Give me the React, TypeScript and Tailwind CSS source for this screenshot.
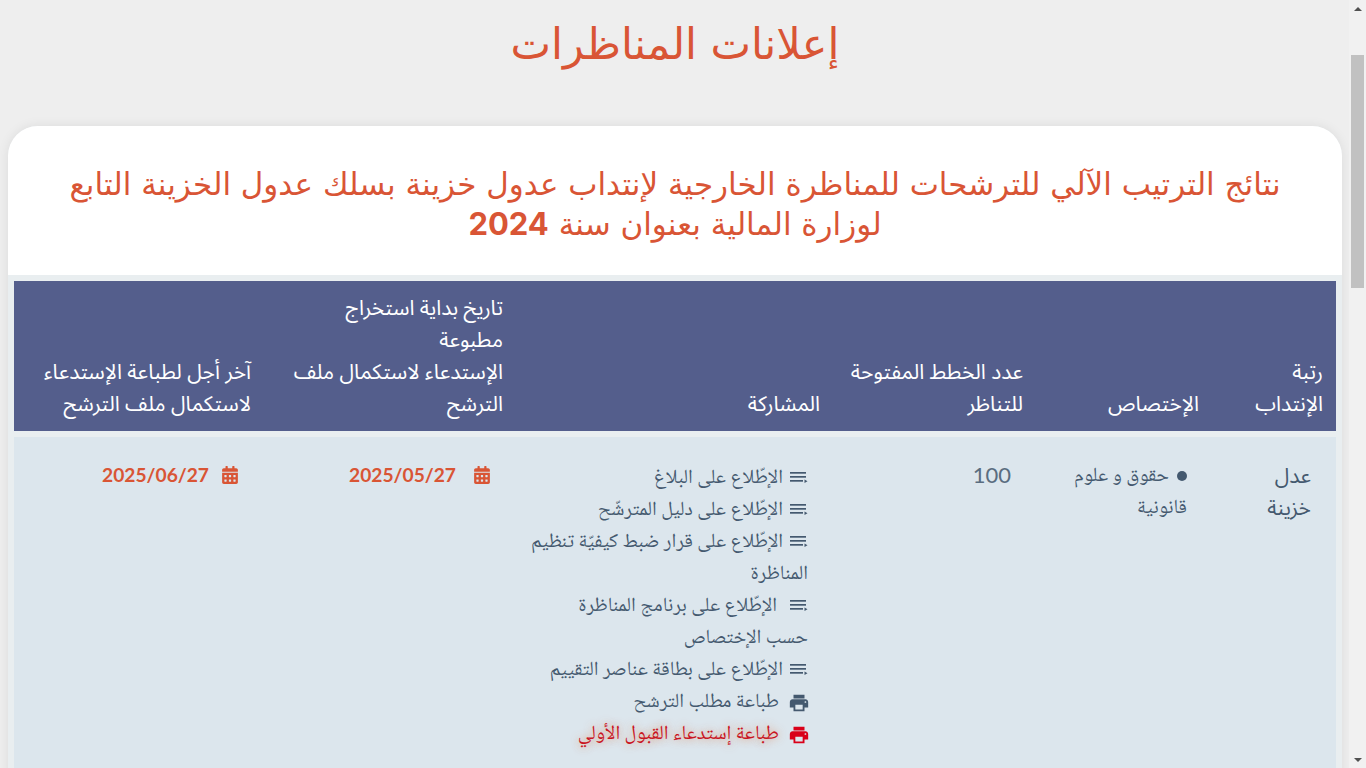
import { FaCalendarAlt } from 'react-icons/fa';
import { MdPrint } from 'react-icons/md';

const ListIcon = ({ wide = false }: { wide?: boolean }) => (
  <svg
    viewBox="0 0 18 14"
    className={`inline-block w-[18px] h-[14px] fill-[#44596f] ${wide ? 'ml-[13px]' : 'ml-[7px]'}`}
  >
    <rect x="0" y="1" width="16" height="1.7" />
    <rect x="0" y="5" width="16" height="1.7" />
    <rect x="0" y="9" width="13" height="1.7" />
    <path d="M14.5 8.5l3 1.8-3 1.8z" />
  </svg>
);

const links = [
  { text: 'الإطّلاع على البلاغ' },
  { text: 'الإطّلاع على دليل المترشّح' },
  { text: 'الإطّلاع على قرار ضبط كيفيّة تنظيم المناظرة' },
  { text: 'الإطّلاع على برنامج المناظرة', more: 'حسب الإختصاص' },
  { text: 'الإطّلاع على بطاقة عناصر التقييم' },
];

function App() {
  return (
    <div className="flex h-screen w-full overflow-hidden bg-[#eeeeee] font-['DejaVu_Sans',sans-serif]">
      <main dir="rtl" className="flex-1 min-w-0 overflow-hidden pr-[7px] pl-[8px]">
        <h1 className="h-[126px] pt-[17px] text-center text-[43px] leading-[54px] text-[#d95535]">إعلانات المناظرات</h1>
        <section className="rounded-t-[30px] bg-[#e9eef0] shadow-[0_0_12px_rgba(0,0,0,0.08)]">
          <h2 className="h-[149px] rounded-t-[30px] bg-white px-[50px] pt-[38px] text-center text-[31px] leading-[40px] text-[#d95535]">
            نتائج الترتيب الآلي للترشحات للمناظرة الخارجية لإنتداب عدول خزينة بسلك عدول الخزينة التابع لوزارة المالية بعنوان سنة <b className="font-['Inter',sans-serif]">2024</b>
          </h2>
          <div className="px-[6px]">
            <table className="w-full table-fixed border-separate border-spacing-x-0 border-spacing-y-[6px] text-[20px] leading-[32px]">
              <colgroup>
                <col className="w-[124px]" />
                <col className="w-[176px]" />
                <col className="w-[203px]" />
                <col className="w-[317px]" />
                <col className="w-[252px]" />
                <col />
              </colgroup>
              <thead className="bg-[#545e8c] text-white text-[21px] font-['Noto_Sans_Arabic',sans-serif]">
                <tr className="align-bottom text-right">
                  <th className="px-[13px] py-[11px] font-normal">
                    رتبة
                    <br />
                    الإنتداب
                  </th>
                  <th className="px-[13px] py-[11px] font-normal">الإختصاص</th>
                  <th className="px-[13px] py-[11px] font-normal">عدد الخطط المفتوحة للتناظر</th>
                  <th className="px-[13px] py-[11px] font-normal">المشاركة</th>
                  <th className="px-[13px] py-[11px] font-normal">
                    تاريخ بداية استخراج
                    <br />
                    مطبوعة
                    <br />
                    الإستدعاء لاستكمال ملف الترشح
                  </th>
                  <th className="px-[13px] py-[11px] font-normal">آخر أجل لطباعة الإستدعاء لاستكمال ملف الترشح</th>
                </tr>
              </thead>
              <tbody className="bg-[#dce6ed] text-[#44596f] font-['Noto_Naskh_Arabic',serif]">
                <tr className="align-top">
                  <td className="px-[25px] pt-[23px] text-[21px] font-['Noto_Sans_Arabic',sans-serif]">عدل خزينة</td>
                  <td className="pr-[25px] pl-[10px] pt-[24px]">
                    <span className="inline-block w-[10px] h-[10px] rounded-full bg-[#44596f] ml-[8px]" />
                    حقوق و علوم قانونية
                  </td>
                  <td className="px-[25px] pt-[22px] font-['Lato',sans-serif] text-[22px] text-[#5a6d80]">100</td>
                  <td className="pr-[25px] pl-[10px] pt-[26px] pb-[40px]">
                    <ul>
                      {links.map((l, i) => (
                        <li key={l.text}>
                          <ListIcon wide={i === 3} />
                          {l.text}
                          {l.more && (
                            <>
                              <br />
                              {l.more}
                            </>
                          )}
                        </li>
                      ))}
                      <li className="flex items-center gap-[9px]">
                        <MdPrint className="text-[22px] -mr-[2px]" /> طباعة مطلب الترشح
                      </li>
                      <li className="flex items-center gap-[9px]">
                        <MdPrint className="text-[22px] -mr-[2px] text-[#d90019]" />
                        <span className="text-[#c9151f] [text-shadow:0_0_8px_rgba(230,110,50,0.7)]">طباعة إستدعاء القبول الأولي</span>
                      </li>
                    </ul>
                  </td>
                  <td className="px-[25px] pt-[22px]">
                    <span className="flex items-center gap-[17px] font-bold text-[19.2px] text-[#d95535] font-['Lato',sans-serif]">
                      <FaCalendarAlt className="text-[18px]" /> 2025/05/27
                    </span>
                  </td>
                  <td className="px-[25px] pt-[22px]">
                    <span className="flex items-center gap-[12px] font-bold text-[19.2px] text-[#d95535] font-['Lato',sans-serif]">
                      <FaCalendarAlt className="text-[18px]" /> 2025/06/27
                    </span>
                  </td>
                </tr>
              </tbody>
            </table>
          </div>
        </section>
      </main>
      <aside className="flex w-[17px] shrink-0 flex-col items-center bg-[#f1f1f1]">
        <div className="flex h-[17px] items-center justify-center">
          <div className="h-0 w-0 border-x-[4px] border-b-[4px] border-x-transparent border-b-[#505050]" />
        </div>
        <div className="mt-[38px] h-[233px] w-[13px] bg-[#c1c1c1]" />
        <div className="flex-1" />
        <div className="flex h-[17px] items-center justify-center">
          <div className="h-0 w-0 border-x-[4px] border-t-[4px] border-x-transparent border-t-[#505050]" />
        </div>
      </aside>
    </div>
  );
}

export default App;
